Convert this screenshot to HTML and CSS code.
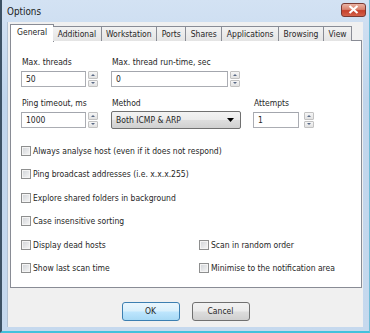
FILE: index.html
```html
<!DOCTYPE html>
<html lang="en">
<head>
  <meta charset="UTF-8">
  <title>Options</title>
  <link rel="stylesheet" href="styles.css">
</head>
<body>
  <div class="window">
    <!-- Title bar -->
    <div class="titlebar">
      <span class="title">Options</span>
      <div class="close">
        <svg width="11" height="9" viewBox="0 0 11 9">
          <path d="M1.5 1 L9.5 8 M9.5 1 L1.5 8" stroke="#fff" stroke-width="2.2"/>
        </svg>
      </div>
    </div>

    <div class="client">
      <!-- Tabs -->
      <div class="tabs">
        <div class="tab active">General</div>
        <div class="tab">Additional</div>
        <div class="tab">Workstation</div>
        <div class="tab">Ports</div>
        <div class="tab">Shares</div>
        <div class="tab">Applications</div>
        <div class="tab">Browsing</div>
        <div class="tab">View</div>
      </div>

      <!-- General page -->
      <div class="panel">
        <div class="fields">
          <div class="field">
            <label>Max. threads</label>
            <div class="spin">
              <div class="edit w-threads">50</div>
              <div class="spinner"><span class="up"></span><span class="down"></span></div>
            </div>
          </div>
          <div class="field wide">
            <label>Max. thread run-time, sec</label>
            <div class="spin">
              <div class="edit w-runtime">0</div>
              <div class="spinner"><span class="up"></span><span class="down"></span></div>
            </div>
          </div>

          <div class="field">
            <label>Ping timeout, ms</label>
            <div class="spin">
              <div class="edit w-threads">1000</div>
              <div class="spinner"><span class="up"></span><span class="down"></span></div>
            </div>
          </div>
          <div class="field">
            <label>Method</label>
            <div class="select">
              <span>Both ICMP &amp; ARP</span>
              <svg width="7" height="4" viewBox="0 0 7 4"><path d="M0 0 H7 L3.5 4 Z" fill="#000"/></svg>
            </div>
          </div>
          <div class="field">
            <label>Attempts</label>
            <div class="spin spin-gap">
              <div class="edit w-attempts">1</div>
              <div class="spinner"><span class="up"></span><span class="down"></span></div>
            </div>
          </div>
        </div>

        <div class="checks">
          <div class="check full"><span class="box"></span>Always analyse host (even if it does not respond)</div>
          <div class="check full"><span class="box"></span>Ping broadcast addresses (i.e. x.x.x.255)</div>
          <div class="check full"><span class="box"></span>Explore shared folders in background</div>
          <div class="check full"><span class="box"></span>Case insensitive sorting</div>
          <div class="check"><span class="box"></span>Display dead hosts</div>
          <div class="check"><span class="box"></span>Scan in random order</div>
          <div class="check"><span class="box"></span>Show last scan time</div>
          <div class="check"><span class="box"></span>Minimise to the notification area</div>
        </div>
      </div>

      <!-- Dialog buttons -->
      <div class="buttons">
        <div class="btn default">OK</div>
        <div class="btn">Cancel</div>
      </div>
    </div>
  </div>
</body>
</html>
```

FILE: styles.css
```css
/* General */
body {
  margin: 0;
  font-family: "DejaVu Sans Condensed", "DejaVu Sans", sans-serif;
  font-size: 8.5px;
  color: #262626;
}

/* Window frame */
.window {
  width: 370px;
  height: 333px;
  box-sizing: border-box;
  background: linear-gradient(#d3e2f3, #c0d5ec 30%, #c6d9ee);
  border-left: 2px solid #3d5265;
  border-right: 1px solid #6fbcd6;
  border-bottom: 2px solid #43c1dc;
  display: flex;
  flex-direction: column;
}

.titlebar {
  height: 22px;
  display: flex;
  align-items: center;
  padding: 0 3px 0 5px;
}
.title {
  font-size: 9.8px;
  color: #1b1b1b;
  margin-top: 1px;
}
.close {
  margin-left: auto;
  margin-top: -3px;
  width: 25px;
  height: 14px;
  box-sizing: border-box;
  border: 1px solid #7a3a33;
  border-radius: 3px;
  background: linear-gradient(#eab3a4, #d9826e 45%, #c6402b 55%, #d3624a);
  display: flex;
  align-items: center;
  justify-content: center;
}

/* Client area */
.client {
  flex: 1;
  margin: 0 6px 4px 5px;
  background: #f0f0f0;
  border-left: 1px solid #b3c3d4;
  padding-top: 2px;
  display: flex;
  flex-direction: column;
}

/* Tabs */
.tabs {
  display: flex;
  padding-left: 3px;
  height: 16px;
  position: relative;
  z-index: 1;
}
.tab {
  margin-top: 2px;
  height: 15px;
  padding: 0 4.5px;
  box-sizing: border-box;
  border: 1px solid #898c95;
  border-bottom: none;
  border-left: none;
  background: linear-gradient(#f2f2f2, #e4e4e4);
  line-height: 14px;
}
.tab.active {
  margin: 0 -1px 0 -1px;
  height: 18px;
  padding: 0 6px;
  border-left: 1px solid #898c95;
  background: #fff;
}

.panel {
  margin-left: 2px;
  width: 352px;
  height: 248px;
  box-sizing: border-box;
  background: #fff;
  border: 1px solid #898c95;
  padding: 16px 0 0 10px;
}

/* Text fields */
.fields {
  display: grid;
  grid-template-columns: 90px 142px auto;
  row-gap: 11px;
}
.field {
  display: flex;
  flex-direction: column;
  gap: 3px;
}
.field.wide {
  grid-column: span 2;
}
.field label {
  line-height: 11px;
  padding-left: 1px;
}
.spin {
  display: flex;
  gap: 2px;
}
.spin-gap {
  gap: 5px;
}
.edit {
  height: 16px;
  box-sizing: border-box;
  border: 1px solid #abadb3;
  border-top-color: #a3a6ad;
  background: #fff;
  padding-left: 4px;
  line-height: 14px;
}
.w-threads { width: 65px; }
.w-runtime { width: 117px; }
.w-attempts { width: 46px; }

.spinner {
  width: 10px;
  height: 16px;
  display: flex;
  flex-direction: column;
  gap: 1px;
}
.spinner span {
  flex: 1;
  border: 1px solid #c2c2c2;
  border-radius: 1px;
  background: linear-gradient(#f6f6f6, #e2e2e2);
  display: flex;
  align-items: center;
  justify-content: center;
}
.spinner span::after {
  content: "";
  border-left: 2px solid transparent;
  border-right: 2px solid transparent;
}
.spinner .up::after { border-bottom: 2px solid #5a6a86; }
.spinner .down::after { border-top: 2px solid #5a6a86; }

.select {
  margin-top: -1px;
  width: 130px;
  height: 18px;
  box-sizing: border-box;
  border: 1px solid #707070;
  border-radius: 2px;
  background: linear-gradient(#f3f3f3, #ebebeb 48%, #dddddd 52%, #d0d0d0);
  padding: 0 6px 0 4px;
  display: flex;
  align-items: center;
  justify-content: space-between;
}

/* Check boxes */
.checks {
  margin-top: 10px;
  display: grid;
  grid-template-columns: 178px auto;
  grid-auto-rows: 23.5px;
}
.check {
  display: flex;
  align-items: center;
  gap: 2px;
}
.check.full {
  grid-column: span 2;
}
.box {
  width: 10px;
  height: 10px;
  box-sizing: border-box;
  border: 1px solid #8e8f8f;
  box-shadow: inset 0 0 0 1px #f4f4f4;
  background: linear-gradient(135deg, #cfd2d6, #f7f7f7);
}

/* Dialog buttons */
.buttons {
  margin-top: 14px;
  display: flex;
  justify-content: center;
  gap: 12px;
}
.btn {
  width: 58px;
  height: 19px;
  box-sizing: border-box;
  border: 1px solid #707070;
  border-radius: 3px;
  background: linear-gradient(#f2f2f2, #ebebeb 48%, #dddddd 52%, #cfcfcf);
  text-align: center;
  line-height: 17px;
}
.btn.default {
  border-color: #3c7fb1;
  background: linear-gradient(#eaf6fd, #d9f0fc 48%, #bee6fd 52%, #a7d9f5);
}
```
